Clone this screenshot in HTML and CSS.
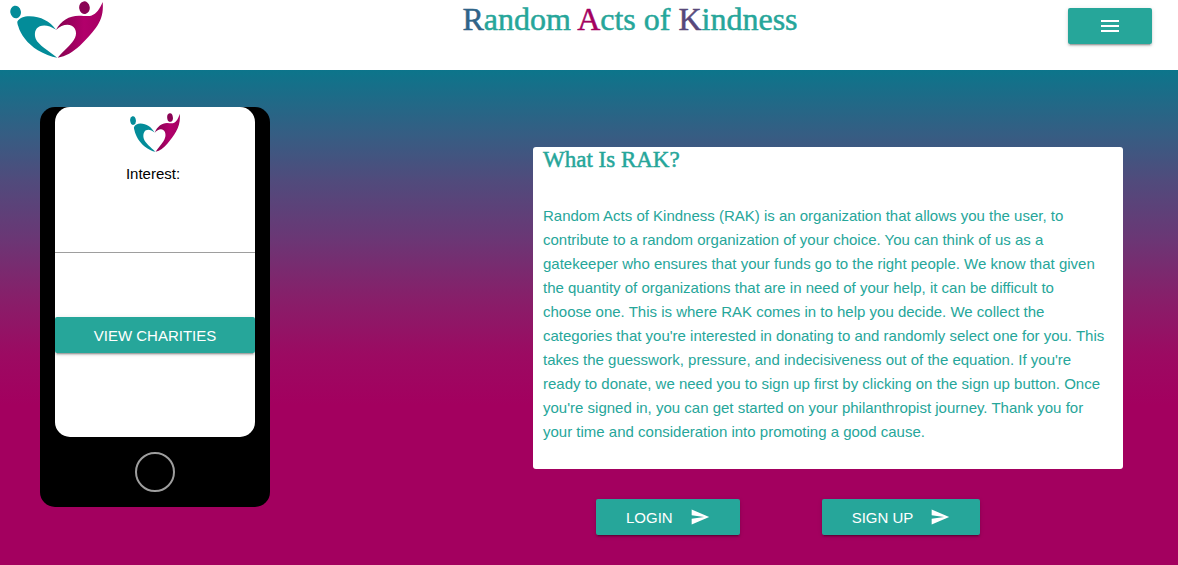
FILE: index.html
```html
<!DOCTYPE html>
<html lang="en">
<head>
<meta charset="utf-8">
<meta name="viewport" content="width=device-width, initial-scale=1">
<title>Random Acts of Kindness</title>
<link rel="stylesheet" href="styles.css">
</head>
<body>
<svg class="defs" width="0" height="0" aria-hidden="true">
  <defs>
    <linearGradient id="magenta" x1="0" x2="1" y1="0" y2="0">
      <stop offset="0" stop-color="#84024f"/>
      <stop offset="0.6" stop-color="#b2006b"/>
      <stop offset="1" stop-color="#a50062"/>
    </linearGradient>
    <symbol id="logo" viewBox="29 3 281 171" preserveAspectRatio="none">
      <ellipse cx="46" cy="36" rx="16" ry="19" fill="#038c99" transform="rotate(-12 46 36)"/>
      <path fill="#038c99" d="M51 65C58 54 70 49 88 49C122 49 150 65 168 89C150 77 132 73 119 79C105 85 101 101 107 117C114 134 146 153 172 173C153 171 132 162 113 151C81 131 61 104 54 79C52 73 51 69 51 65Z"/>
      <ellipse cx="254" cy="23" rx="16" ry="19" fill="#8a0354" transform="rotate(-8 254 23)"/>
      <path fill="url(#magenta)" d="M168 90C182 62 208 47 237 47C252 47 264 50 274 47C291 42 300 26 309 6C312 39 304 62 288 84C276 101 258 119 240 137C219 156 197 169 173 173C184 161 206 140 217 127C228 113 232 99 225 86C215 69 187 71 168 90Z"/>
    </symbol>
    <symbol id="send" viewBox="0 0 24 24">
      <path fill="currentColor" d="M2.01 21L23 12 2.01 3 2 10l15 2-15 2z"/>
    </symbol>
  </defs>
</svg>

<header class="topbar">
  <svg class="topbar-logo" role="img" aria-label="RAK logo"><use href="#logo"/></svg>
  <h1 class="title"><span class="r">R</span>andom <span class="a">A</span>cts of <span class="k">K</span>indness</h1>
  <button class="btn menu" type="button" aria-label="Menu">
    <svg width="24" height="24" viewBox="0 0 24 24"><path fill="currentColor" d="M3 18h18v-2H3v2zm0-5h18v-2H3v2zm0-7v2h18V6H3z"/></svg>
  </button>
</header>

<main class="stage">
  <section class="phone">
    <div class="screen">
      <svg class="screen-logo" aria-hidden="true"><use href="#logo"/></svg>
      <label class="label" for="interest">Interest:</label>
      <input class="field" id="interest" type="text">
      <button class="btn view" type="button">VIEW CHARITIES</button>
    </div>
    <button class="home" type="button" aria-label="Home"></button>
  </section>

  <section class="about">
    <article class="card">
      <h2 class="card-title">What Is RAK?</h2>
      <p class="card-text">Random Acts of Kindness (RAK) is an organization that allows you the user, to<br>
        contribute to a random organization of your choice. You can think of us as a<br>
        gatekeeper who ensures that your funds go to the right people. We know that given<br>
        the quantity of organizations that are in need of your help, it can be difficult to<br>
        choose one. This is where RAK comes in to help you decide. We collect the<br>
        categories that you're interested in donating to and randomly select one for you. This<br>
        takes the guesswork, pressure, and indecisiveness out of the equation. If you're<br>
        ready to donate, we need you to sign up first by clicking on the sign up button. Once<br>
        you're signed in, you can get started on your philanthropist journey. Thank you for<br>
        your time and consideration into promoting a good cause.</p>
    </article>
    <div class="actions">
      <button class="btn" type="button">LOGIN <svg class="send"><use href="#send"/></svg></button>
      <button class="btn" type="button">SIGN UP <svg class="send"><use href="#send"/></svg></button>
    </div>
  </section>
</main>
</body>
</html>
```

FILE: styles.css
```css
* { box-sizing: border-box; }

body {
  margin: 0;
  min-height: 100vh;
  display: flex;
  flex-direction: column;
  font-family: "Liberation Sans", Arial, sans-serif;
  font-size: 15px;
  color: #000;
}

.defs { position: absolute; }

.topbar {
  display: flex;
  align-items: flex-start;
  height: 70px;
  padding: 0 26px 0 10px;
  background: #fff;
}

.topbar-logo { width: 93px; height: 57px; margin-top: 1px; }

.title {
  flex: 1;
  margin: 0;
  padding-left: 89px;
  text-align: center;
  font-family: "Liberation Serif", "Times New Roman", serif;
  font-size: 32px;
  font-weight: 400;
  line-height: 38px;
  color: #26a69a;
  -webkit-text-stroke: 0.5px currentColor;
}

.r { color: #2f6488; }
.a { color: #a3005f; }
.k { color: #57487b; }

.btn {
  display: inline-flex;
  align-items: center;
  justify-content: center;
  gap: 17px;
  height: 36px;
  padding: 0 30px;
  border: 0;
  border-radius: 2px;
  background: #26a69a;
  color: #fff;
  font: inherit;
  box-shadow: 0 2px 2px rgba(0, 0, 0, 0.14), 0 1px 5px rgba(0, 0, 0, 0.12), 0 3px 1px -2px rgba(0, 0, 0, 0.2);
  cursor: pointer;
}

.menu { margin-top: 8px; }
.send { width: 20px; height: 20px; }

.stage {
  flex: 1;
  display: grid;
  grid-template-columns: 493px 1fr;
  align-items: start;
  padding: 37px 55px 30px 40px;
  background: linear-gradient(#0c758b 0, #365d83 65px, #504b7c 110px, #6a3775 168px, #86206a 225px, #9c0a62 285px, #a3005f 335px);
}

.phone {
  display: flex;
  flex-direction: column;
  align-items: center;
  width: 230px;
  padding-bottom: 15px;
  border-radius: 15px;
  background: #000;
}

.screen {
  display: flex;
  flex-direction: column;
  align-items: center;
  width: 200px;
  height: 330px;
  padding-top: 6px;
  border-radius: 15px;
  background: #fff;
}

.screen-logo { width: 50px; height: 39px; }
.label { margin: 11px 4px 0 0; line-height: 22px; }

.field {
  width: 100%;
  height: 48px;
  margin: 20px 0 64px;
  padding: 0;
  border: 0;
  border-bottom: 1px solid #9e9e9e;
  background: transparent;
  font: inherit;
  outline: none;
}

.view { width: 100%; }

.home {
  width: 40px;
  height: 40px;
  margin-top: 15px;
  padding: 0;
  border: 2px solid #9e9e9e;
  border-radius: 50%;
  background: transparent;
}

.about { padding-top: 40px; }

.card {
  padding: 0 10px 25px;
  border-radius: 3px;
  background: #fff;
  color: #26a69a;
}

.card-title {
  margin: 0 0 31px;
  font-family: "Liberation Serif", "Times New Roman", serif;
  font-size: 23px;
  font-weight: 400;
  line-height: 26px;
  -webkit-text-stroke: 0.5px currentColor;
}

.card-text { margin: 0; line-height: 24px; }

.actions {
  display: flex;
  gap: 82px;
  padding: 30px 0 0 63px;
}
```
